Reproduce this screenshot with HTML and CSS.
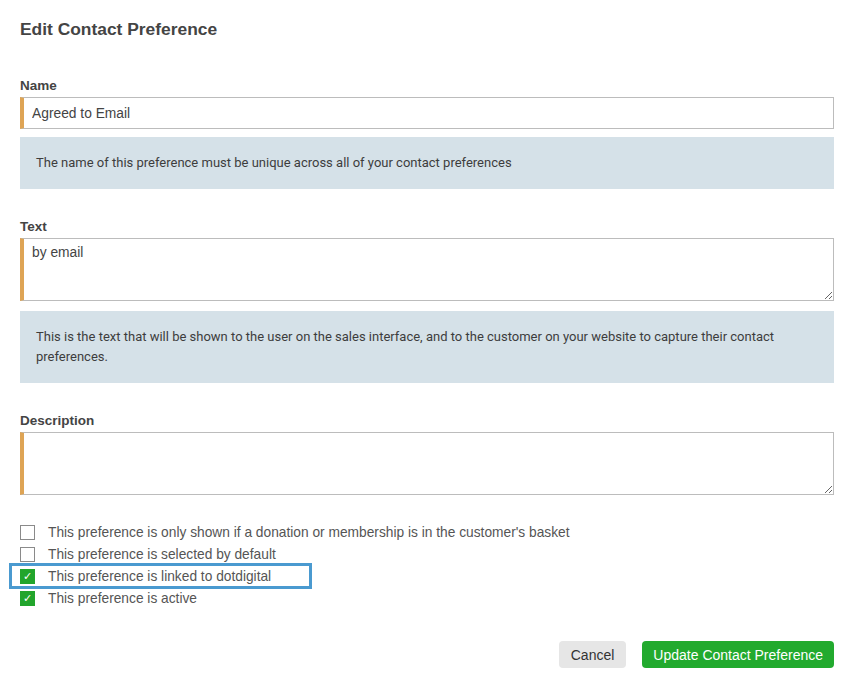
FILE: index.html
```html
<!DOCTYPE html>
<html lang="en">
<head>
  <meta charset="UTF-8" />
  <title>Edit Contact Preference</title>
  <link rel="stylesheet" href="styles.css">
</head>
<body>
  <form class="panel">
    <h1>Edit Contact Preference</h1>

    <div class="field">
      <label>Name</label>
      <input type="text" class="req" value="Agreed to Email" />
      <div class="hint">The name of this preference must be unique across all of your contact preferences</div>
    </div>

    <div class="field">
      <label>Text</label>
      <textarea class="req">by email</textarea>
      <div class="hint">This is the text that will be shown to the user on the sales interface, and to the customer on your website to capture their contact preferences.</div>
    </div>

    <div class="field last">
      <label>Description</label>
      <textarea class="req"></textarea>
    </div>

    <div class="checks">
      <div class="check"><span class="box"></span>This preference is only shown if a donation or membership is in the customer's basket</div>
      <div class="check"><span class="box"></span>This preference is selected by default</div>
      <div class="check marked"><span class="box on">&#10003;</span>This preference is linked to dotdigital</div>
      <div class="check"><span class="box on">&#10003;</span>This preference is active</div>
    </div>

    <div class="actions">
      <button type="button" class="btn cancel">Cancel</button>
      <button type="button" class="btn primary">Update Contact Preference</button>
    </div>
  </form>
</body>
</html>
```

FILE: styles.css
```css
body { margin: 0; background: #fff; color: #3d3d3d; font-family: "Liberation Sans", Arial, sans-serif; }
.panel { padding: 20px 22px 20px 20px; }
h1 { margin: 0 0 39px; font-size: 17.4px; line-height: 18px; font-weight: bold; color: #444; }
.field { margin-bottom: 29px; }
.field.last { margin-bottom: 26px; }
.field label { display: block; font-size: 13.5px; line-height: 18px; font-weight: bold; color: #444; margin-bottom: 2px; }
.req { display: block; box-sizing: border-box; width: 100%; border: 1px solid #bcbcbc; border-left: 4px solid #dea455; font-family: "Liberation Sans", Arial, sans-serif; font-size: 13.8px; color: #444; padding: 0 8px; margin: 0; outline: none; }
input.req { height: 32px; }
textarea.req { height: 63px; padding-top: 6px; resize: vertical; }
.hint { margin-top: 8px; background: #d5e1e8; padding: 16px; font-family: Roboto, sans-serif; font-size: 13px; line-height: 20px; color: #3d3d3d; }
textarea + .hint { margin-top: 10px; }
.checks { display: flex; flex-direction: column; }
.check { position: relative; display: flex; align-items: center; height: 22px; font-size: 13.75px; color: #555; }
.box { box-sizing: border-box; width: 15px; height: 15px; margin-right: 13px; border: 1px solid #8a8a8a; background: #fff; color: #fff; font-size: 11px; line-height: 13px; text-align: center; }
.box.on { background: #22a52c; border-color: #22a52c; }
.marked::before { content: ""; position: absolute; left: -11px; top: -2px; width: 297px; height: 20px; border: 3px solid #4a9ad0; }
.actions { display: flex; justify-content: flex-end; gap: 16px; margin-top: 32px; }
.btn { height: 27px; border: none; border-radius: 4px; font-family: "Liberation Sans", Arial, sans-serif; font-size: 14px; padding: 0 11px; cursor: pointer; }
.cancel { background: #e6e6e6; color: #333; padding: 0 12px; }
.primary { background: #22aa2e; color: #fff; }
```
